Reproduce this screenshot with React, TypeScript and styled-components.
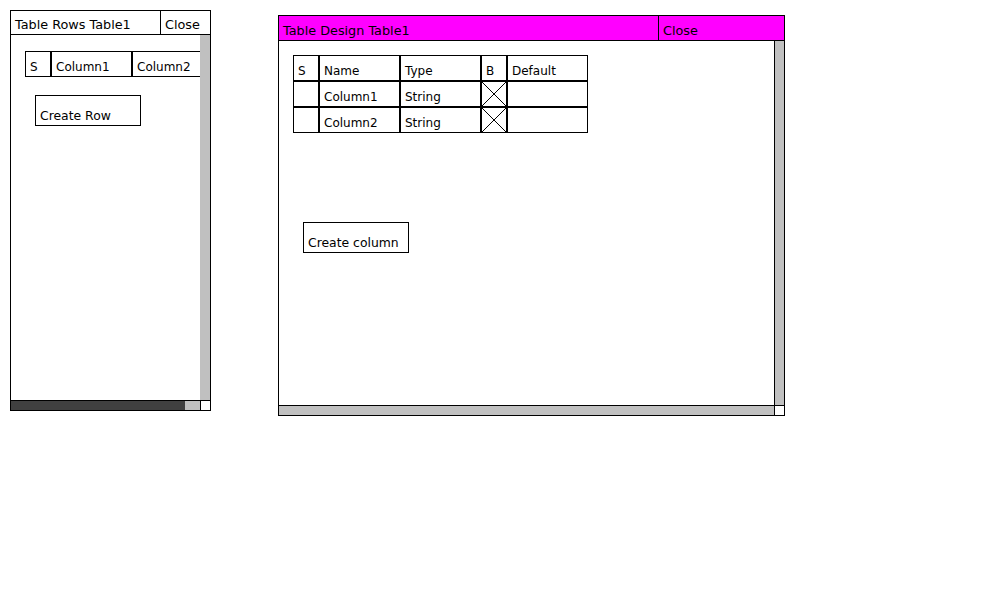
import React from "react";
import styled, { createGlobalStyle } from "styled-components";

const GlobalStyle = createGlobalStyle`
  html, body {
    margin: 0;
    padding: 0;
    background: #ffffff;
  }
  body {
    font-family: "DejaVu Sans", "Liberation Sans", sans-serif;
    font-size: 12px;
    color: #000000;
  }
  * { box-sizing: border-box; }
`;

const Desktop = styled.div`
  position: relative;
  width: 1000px;
  height: 600px;
  overflow: hidden;
  background: #ffffff;
`;

const Window = styled.section<{ $left: number; $top: number; $width: number }>`
  position: absolute;
  left: ${(p) => p.$left}px;
  top: ${(p) => p.$top}px;
  width: ${(p) => p.$width}px;
  height: 401px;
  border: 1px solid #000;
  background: #fff;
  display: flex;
  flex-direction: column;
`;

const TitleBar = styled.header<{ $height: number; $bg: string }>`
  display: flex;
  height: ${(p) => p.$height + 1}px;
  flex: none;
  border-bottom: 1px solid #000;
  background: ${(p) => p.$bg};
  font-size: 12.8px;
`;

const TitleText = styled.div`
  flex: 1;
  display: flex;
  align-items: flex-end;
  padding: 0 4px 2px;
  line-height: 15px;
  white-space: nowrap;
`;

const CloseCell = styled.div<{ $width: number }>`
  flex: none;
  width: ${(p) => p.$width + 1}px;
  border-left: 1px solid #000;
  display: flex;
  align-items: flex-end;
  padding: 0 4px 2px;
  line-height: 15px;
`;

const Body = styled.div`
  flex: 1;
  min-height: 0;
  display: flex;
`;

const Content = styled.div<{ $padTop: number }>`
  flex: 1;
  min-width: 0;
  overflow: hidden;
  padding: ${(p) => p.$padTop}px 0 0 14px;
  display: flex;
  flex-direction: column;
  align-items: flex-start;
`;

const VScroll = styled.div<{ $bordered: boolean }>`
  flex: none;
  width: 10px;
  background: #c0c0c0;
  border-left: ${(p) => (p.$bordered ? "1px solid #000" : "none")};
`;

const HScrollRow = styled.div`
  flex: none;
  height: 10px;
  border-top: 1px solid #000;
  display: flex;
`;

const HThumb = styled.div<{ $width: number }>`
  flex: none;
  width: ${(p) => p.$width}px;
  background: #404040;
`;

const HTrack = styled.div`
  flex: 1;
  background: #c0c0c0;
`;

const Corner = styled.div`
  flex: none;
  width: 10px;
  border-left: 1px solid #000;
  background: #fff;
`;

const Grid = styled.div<{ $cols: string }>`
  display: grid;
  grid-template-columns: ${(p) => p.$cols};
  grid-auto-rows: 26px;
  width: max-content;
  flex: none;
`;

const Cell = styled.div`
  border: 1px solid #000;
  display: flex;
  align-items: flex-end;
  padding: 0 4px 2px;
  line-height: 14px;
  white-space: nowrap;
  overflow: hidden;
`;

const CrossCell = styled.div`
  border: 1px solid #000;
  svg {
    display: block;
    width: 100%;
    height: 100%;
  }
`;

const ActionButton = styled.div<{ $top: number }>`
  flex: none;
  width: 106px;
  height: 31px;
  margin: ${(p) => p.$top}px 0 0 10px;
  border: 1px solid #000;
  display: flex;
  align-items: flex-end;
  padding: 0 4px 2px;
  font-size: 12.4px;
  line-height: 14px;
  white-space: nowrap;
`;

const Cross = () => (
  <CrossCell>
    <svg viewBox="0 0 24 24" preserveAspectRatio="none">
      <line x1="0" y1="0" x2="24" y2="24" stroke="#000" strokeWidth="1" vectorEffect="non-scaling-stroke" />
      <line x1="24" y1="0" x2="0" y2="24" stroke="#000" strokeWidth="1" vectorEffect="non-scaling-stroke" />
    </svg>
  </CrossCell>
);

export default function App() {
  const designRows = [
    { name: "Column1", type: "String" },
    { name: "Column2", type: "String" },
  ];
  return (
    <>
      <GlobalStyle />
      <Desktop>
        <Window $left={10} $top={10} $width={201}>
          <TitleBar $height={23} $bg="#ffffff">
            <TitleText>Table Rows Table1</TitleText>
            <CloseCell $width={49}>Close</CloseCell>
          </TitleBar>
          <Body>
            <Content $padTop={16}>
              <Grid $cols="26px 81px 81px">
                <Cell>S</Cell>
                <Cell>Column1</Cell>
                <Cell>Column2</Cell>
              </Grid>
              <ActionButton $top={18}>Create Row</ActionButton>
            </Content>
            <VScroll $bordered={false} />
          </Body>
          <HScrollRow>
            <HThumb $width={174} />
            <HTrack />
            <Corner />
          </HScrollRow>
        </Window>

        <Window $left={278} $top={15} $width={507}>
          <TitleBar $height={24} $bg="#ff00ff">
            <TitleText>Table Design Table1</TitleText>
            <CloseCell $width={125}>Close</CloseCell>
          </TitleBar>
          <Body>
            <Content $padTop={14}>
              <Grid $cols="26px 81px 81px 26px 81px">
                <Cell>S</Cell>
                <Cell>Name</Cell>
                <Cell>Type</Cell>
                <Cell>B</Cell>
                <Cell>Default</Cell>
                {designRows.map((r) => (
                  <React.Fragment key={r.name}>
                    <Cell />
                    <Cell>{r.name}</Cell>
                    <Cell>{r.type}</Cell>
                    <Cross />
                    <Cell />
                  </React.Fragment>
                ))}
              </Grid>
              <ActionButton $top={89}>Create column</ActionButton>
            </Content>
            <VScroll $bordered={true} />
          </Body>
          <HScrollRow>
            <HThumb $width={0} />
            <HTrack />
            <Corner />
          </HScrollRow>
        </Window>
      </Desktop>
    </>
  );
}
